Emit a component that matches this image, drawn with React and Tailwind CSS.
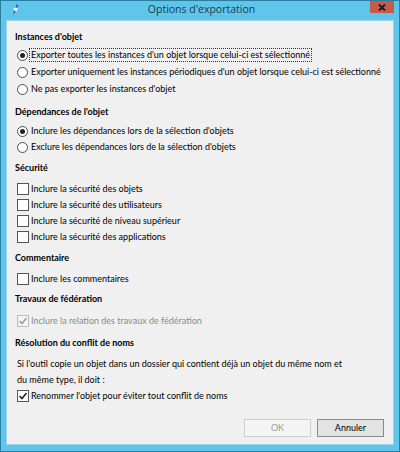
import React from "react";

const Radio = ({ checked, label, focused }) => (
  <div className="flex items-center h-[16px]">
    <span className="w-[11px] h-[11px] rounded-full border border-[#4d4d4d] bg-white flex items-center justify-center shrink-0">
      {checked && <span className="w-[5px] h-[5px] rounded-full bg-[#222]" />}
    </span>
    <span className={"ml-[1px] px-[1px] leading-[12px] whitespace-nowrap " + (focused ? "border border-dotted border-[#333]" : "border border-transparent")}>
      {label}
    </span>
  </div>
);

const Check = ({ checked, disabled, label }) => (
  <div className="flex items-center h-[16px]">
    <span
      className={
        "w-[12px] h-[12px] border flex items-center justify-center shrink-0 " +
        (disabled ? "border-[#bcbcbc] bg-[#f4f4f4]" : "border-[#555] bg-white")
      }
    >
      {checked && (
        <svg width="10" height="10" viewBox="0 0 10 10">
          <polyline points="1.5,5 4,7.5 8.5,2" fill="none" stroke={disabled ? "#a0a0a0" : "#222"} strokeWidth="1.6" />
        </svg>
      )}
    </span>
    <span className={"ml-[2px] whitespace-nowrap " + (disabled ? "text-[#8a8a8a]" : "")}>{label}</span>
  </div>
);

const Heading = ({ children }) => (
  <div className="font-bold h-[14px] flex items-center">{children}</div>
);

export default function App() {
  return (
    <div
      className="w-[400px] h-[452px] bg-[#5fc5ea] border border-[#2a7fa0] flex flex-col text-[9px] text-black overflow-hidden"
      style={{ fontFamily: 'Lato, "Noto Sans", sans-serif' }}
    >
      {/* title bar */}
      <div className="h-[19px] flex items-start shrink-0">
        <div className="w-[30px] flex justify-center pt-[2px]">
          <svg width="12" height="13" viewBox="0 0 12 13">
            <path d="M6 1 L9 3 L6 5 Z" fill="#2a6fd0" />
            <path d="M3 5 L8 5 L6 9 Z" fill="#ffffff" />
            <path d="M4 8 L6 8 L3 12 Z" fill="#1f5fc0" />
          </svg>
        </div>
        <div className="flex-1 text-center text-[10.5px] leading-[17px] text-[#1d3b4c] pl-[2px]" style={{ fontFamily: '"Open Sans", sans-serif' }}>
          Options d'exportation
        </div>
        <div className="w-[24px] h-[12px] bg-[#c75a48] flex items-center justify-center mr-[5px]">
          <svg width="8" height="7" viewBox="0 0 8 7">
            <path d="M1 0.5 L7 6.5 M7 0.5 L1 6.5" stroke="#1a1a1a" strokeWidth="1.8" />
          </svg>
        </div>
      </div>

      {/* content */}
      <div className="flex-1 mx-[5px] mb-[6px] bg-[#f0f0f0] border border-[#9fd6ec] pl-[8px] pr-[8px] pt-[9px] flex flex-col">
        <Heading>Instances d'objet</Heading>
        <div className="mt-[3px] pl-[2px] flex flex-col gap-[1px]">
          <Radio checked focused label="Exporter toutes les instances d'un objet lorsque celui-ci est sélectionné" />
          <Radio label="Exporter uniquement les instances périodiques d'un objet lorsque celui-ci est sélectionné" />
          <Radio label="Ne pas exporter les instances d'objet" />
        </div>

        <div className="mt-[8px]"><Heading>Dépendances de l'objet</Heading></div>
        <div className="mt-[4px] pl-[2px] flex flex-col">
          <Radio checked label="Inclure les dépendances lors de la sélection d'objets" />
          <Radio label="Exclure les dépendances lors de la sélection d'objets" />
        </div>

        <div className="mt-[6px]"><Heading>Sécurité</Heading></div>
        <div className="mt-[6px] pl-[2px] flex flex-col">
          <Check label="Inclure la sécurité des objets" />
          <Check label="Inclure la sécurité des utilisateurs" />
          <Check label="Inclure la sécurité de niveau supérieur" />
          <Check label="Inclure la sécurité des applications" />
        </div>

        <div className="mt-[6px]"><Heading>Commentaire</Heading></div>
        <div className="mt-[6px] pl-[2px] flex flex-col">
          <Check label="Inclure les commentaires" />
        </div>

        <div className="mt-[5px]"><Heading>Travaux de fédération</Heading></div>
        <div className="mt-[7px] pl-[2px] flex flex-col">
          <Check checked disabled label="Inclure la relation des travaux de fédération" />
        </div>

        <div className="mt-[7px]"><Heading>Résolution du conflit de noms</Heading></div>
        <div className="mt-[6px] pl-[2px] leading-[16px] whitespace-nowrap">
          Si l'outil copie un objet dans un dossier qui contient déjà un objet du même nom et
          <br />
          du même type, il doit :
        </div>
        <div className="mt-[0px] pl-[2px] flex flex-col">
          <Check checked label="Renommer l'objet pour éviter tout conflit de noms" />
        </div>

        <div className="flex justify-end gap-[6px] mt-[15px] pr-[1px]">
          <div className="w-[67px] h-[18px] border border-[#cfcfcf] bg-[#f4f4f4] text-[#9a9a9a] flex items-center justify-center">
            OK
          </div>
          <div className="w-[67px] h-[18px] border border-[#8a8a8a] bg-[#e3e3e3] flex items-center justify-center">
            Annuler
          </div>
        </div>
      </div>
    </div>
  );
}
